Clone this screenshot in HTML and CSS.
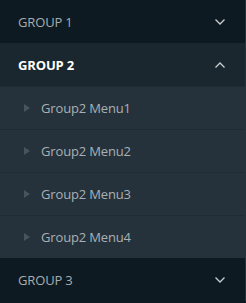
FILE: index.html
```html
<!DOCTYPE html>
<html>
<head>
<meta charset="utf-8">
<link rel="stylesheet" href="styles.css">
</head>
<body>
<nav class="menu">
  <div class="group">
    <div class="group-head">
      <span>GROUP 1</span>
      <svg class="chev" width="10" height="6" viewBox="0 0 10 6"><path d="M0.5 0.5 L5 5 L9.5 0.5" fill="none" stroke="currentColor" stroke-width="1.3"/></svg>
    </div>
  </div>
  <div class="group open">
    <div class="group-head">
      <span>GROUP 2</span>
      <svg class="chev" width="10" height="6" viewBox="0 0 10 6"><path d="M0.5 5.5 L5 1 L9.5 5.5" fill="none" stroke="currentColor" stroke-width="1.3"/></svg>
    </div>
    <ul class="items">
      <li class="item"><span class="tri"></span>Group2 Menu1</li>
      <li class="item"><span class="tri"></span>Group2 Menu2</li>
      <li class="item"><span class="tri"></span>Group2 Menu3</li>
      <li class="item"><span class="tri"></span>Group2 Menu4</li>
    </ul>
  </div>
  <div class="group">
    <div class="group-head">
      <span>GROUP 3</span>
      <svg class="chev" width="10" height="6" viewBox="0 0 10 6"><path d="M0.5 0.5 L5 5 L9.5 0.5" fill="none" stroke="currentColor" stroke-width="1.3"/></svg>
    </div>
  </div>
</nav>
</body>
</html>
```
FILE: styles.css
```css
html, body {
  margin: 0;
  padding: 0;
  background: #0d1a21;
}
.menu {
  width: 245px;
  border-right: 1px solid #24333b;
  font-family: "Open Sans", "Liberation Sans", sans-serif;
  font-size: 13px;
  letter-spacing: -0.15px;
}
.group-head {
  height: 43px;
  display: flex;
  align-items: center;
  justify-content: space-between;
  padding: 0 20px 0 18px;
  background: #0d1a21;
  color: #a6adb1;
}
.group.open .group-head {
  background: #1a272e;
  color: #ffffff;
  font-weight: 700;
}
.chev {
  display: block;
  color: #c9ced1;
}
.items {
  list-style: none;
  margin: 0;
  padding: 0;
  background: #25323b;
}
.item {
  height: 42px;
  border-top: 1px solid #1e2b33;
  display: flex;
  align-items: center;
  padding-left: 24px;
  color: #a9b0b5;
}
.tri {
  width: 0;
  height: 0;
  border-left: 6px solid #46545c;
  border-top: 4px solid transparent;
  border-bottom: 4px solid transparent;
  margin-right: 11px;
}
```
